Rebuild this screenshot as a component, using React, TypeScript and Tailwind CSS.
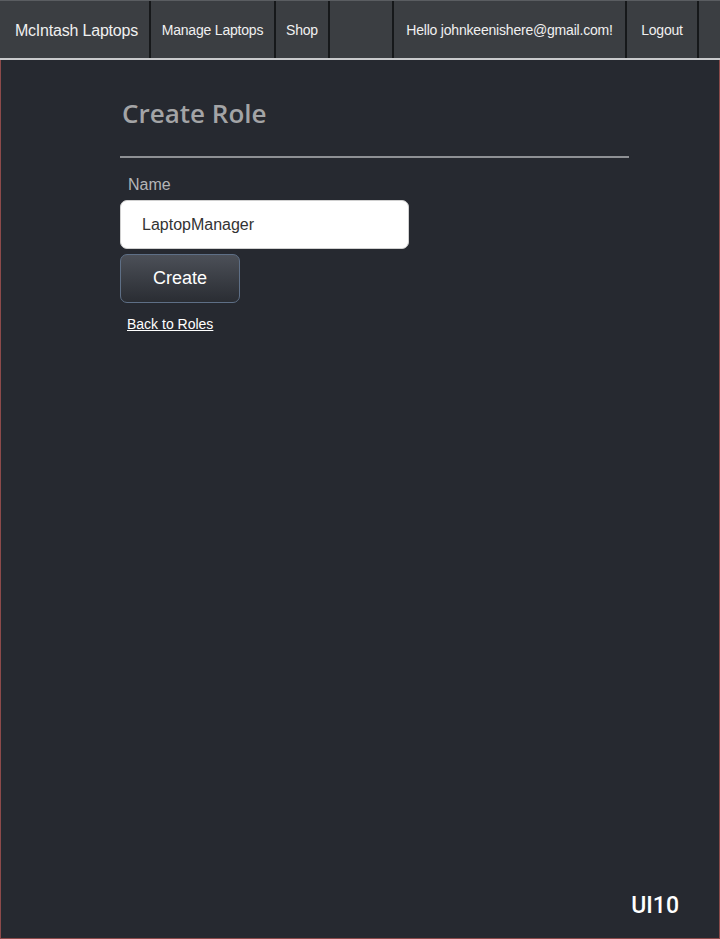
import React from 'react';

const navItems = [
    { label: 'McIntash Laptops', width: 'w-[151px]', size: 'text-[16px] pl-[4px]' },
    { label: 'Manage Laptops', width: 'w-[125px]', size: 'text-[14px]' },
    { label: 'Shop', width: 'w-[54px]', size: 'text-[14px]' },
    { label: '', width: 'w-[64px]', size: 'text-[14px]' },
    { label: 'Hello johnkeenishere@gmail.com!', width: 'w-[233px]', size: 'text-[14px]' },
    { label: 'Logout', width: 'w-[72px]', size: 'text-[14px]' },
];

const App = () => {
    return (
        <div className="w-[720px] h-[939px] flex flex-col bg-[#262930] font-['Liberation_Sans',Arial,sans-serif]">
            {/* Navbar */}
            <nav className="h-[60px] flex bg-[#3b3e42] border-t border-[#5a5d61] border-b-2 border-b-[#c9cacc] shrink-0">
                {navItems.map((item, i) => (
                    <div
                        key={i}
                        className={`${item.width} ${item.size} h-full flex items-center justify-center pt-[2px] border-r-2 border-[#16181a] text-[#f0f0f0] tracking-[-0.2px] shrink-0`}
                    >
                        {item.label}
                    </div>
                ))}
                <div className="flex-1" />
            </nav>

            {/* Body */}
            <main className="flex-1 flex flex-col border-l border-r border-b border-[#8c4a4a]">
                <div className="ml-[119px] w-[509px] pt-[36px]">
                    <h1 className="pl-[2px] text-[26px] leading-[34px] font-semibold text-[#a3a4a6] font-['Open_Sans',sans-serif]">Create Role</h1>
                    <hr className="mt-[26px] border-t-2 border-[#8e9094]" />
                    <label className="block mt-[18px] pl-[8px] text-[16px] leading-[18px] text-[#b4b5b7]">Name</label>
                    <input
                        readOnly
                        value="LaptopManager"
                        className="mt-[6px] w-[289px] h-[49px] bg-white rounded-[7px] border border-[#d0d0d0] pl-[21px] text-[16px] text-[#333] outline-none"
                    />
                    <button className="mt-[5px] block w-[120px] h-[49px] rounded-[7px] border border-[#5e6f86] bg-gradient-to-b from-[#4c5058] to-[#2a2d33] text-white text-[18px]">
                        Create
                    </button>
                    <a href="#" className="inline-block mt-[11px] ml-[7px] text-[14px] text-white underline">Back to Roles</a>
                </div>
                <div className="mt-auto flex justify-end pr-[40px] pb-[15px]">
                    <span className="text-[23px] text-white font-medium font-['Roboto',sans-serif]">UI10</span>
                </div>
            </main>
        </div>
    );
};

export default App;
